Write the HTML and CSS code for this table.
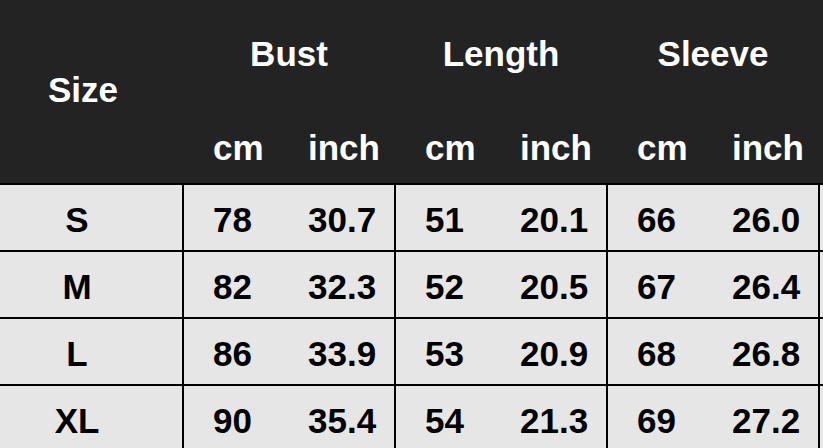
FILE: index.html
```html
<!DOCTYPE html>
<html>
<head>
<meta charset="utf-8">
<link rel="stylesheet" href="styles.css">
</head>
<body>
<div class="chart">
  <div class="head">
    <div class="size-head">Size</div>
    <div class="group-head">
      <div class="title">Bust</div>
      <div class="pair"><span class="cm">cm</span><span class="in">inch</span></div>
    </div>
    <div class="group-head">
      <div class="title">Length</div>
      <div class="pair"><span class="cm">cm</span><span class="in">inch</span></div>
    </div>
    <div class="group-head">
      <div class="title">Sleeve</div>
      <div class="pair"><span class="cm">cm</span><span class="in">inch</span></div>
    </div>
    <div class="edge"></div>
  </div>
  <div class="body">
    <div class="row">
      <div class="cell size">S</div>
      <div class="cell pair"><span class="cm">78</span><span class="in">30.7</span></div>
      <div class="cell pair"><span class="cm">51</span><span class="in">20.1</span></div>
      <div class="cell pair"><span class="cm">66</span><span class="in">26.0</span></div>
      <div class="cell"></div>
    </div>
    <div class="row">
      <div class="cell size">M</div>
      <div class="cell pair"><span class="cm">82</span><span class="in">32.3</span></div>
      <div class="cell pair"><span class="cm">52</span><span class="in">20.5</span></div>
      <div class="cell pair"><span class="cm">67</span><span class="in">26.4</span></div>
      <div class="cell"></div>
    </div>
    <div class="row">
      <div class="cell size">L</div>
      <div class="cell pair"><span class="cm">86</span><span class="in">33.9</span></div>
      <div class="cell pair"><span class="cm">53</span><span class="in">20.9</span></div>
      <div class="cell pair"><span class="cm">68</span><span class="in">26.8</span></div>
      <div class="cell"></div>
    </div>
    <div class="row">
      <div class="cell size">XL</div>
      <div class="cell pair"><span class="cm">90</span><span class="in">35.4</span></div>
      <div class="cell pair"><span class="cm">54</span><span class="in">21.3</span></div>
      <div class="cell pair"><span class="cm">69</span><span class="in">27.2</span></div>
      <div class="cell"></div>
    </div>
  </div>
</div>
</body>
</html>
```

FILE: styles.css
```css
html, body {
  margin: 0;
  padding: 0;
  background: #e6e6e6;
}
body {
  width: 823px;
  height: 448px;
  overflow: hidden;
  font-family: "Liberation Sans", Arial, sans-serif;
  font-weight: bold;
  font-size: 35px;
  line-height: 35px;
}
.chart {
  display: flex;
  flex-direction: column;
}
.head {
  display: grid;
  grid-template-columns: 182px 210px 210px 210px 1fr;
  column-gap: 2px;
  height: 183px;
  background: #232323;
  color: #fff;
  border-bottom: 2px solid #000;
}
.size-head {
  padding-top: 72px;
  padding-left: 48px;
}
.group-head {
  padding-top: 36px;
  display: flex;
  flex-direction: column;
}
.group-head .title {
  text-align: center;
  height: 35px;
  margin-bottom: 59px;
}
.pair {
  display: flex;
}
.pair .cm {
  width: 124px;
  padding-left: 29px;
  box-sizing: border-box;
}
.pair .in {
  flex: 1;
}
.body {
  display: flex;
  flex-direction: column;
  row-gap: 2px;
  background: #000;
}
.row {
  display: grid;
  grid-template-columns: 182px 210px 210px 210px 1fr;
  column-gap: 2px;
  height: 65px;
  color: #000;
}
.cell {
  background: #e6e6e6;
  padding-top: 17px;
  box-sizing: border-box;
}
.cell.size {
  text-align: center;
  padding-right: 28px;
}
```
